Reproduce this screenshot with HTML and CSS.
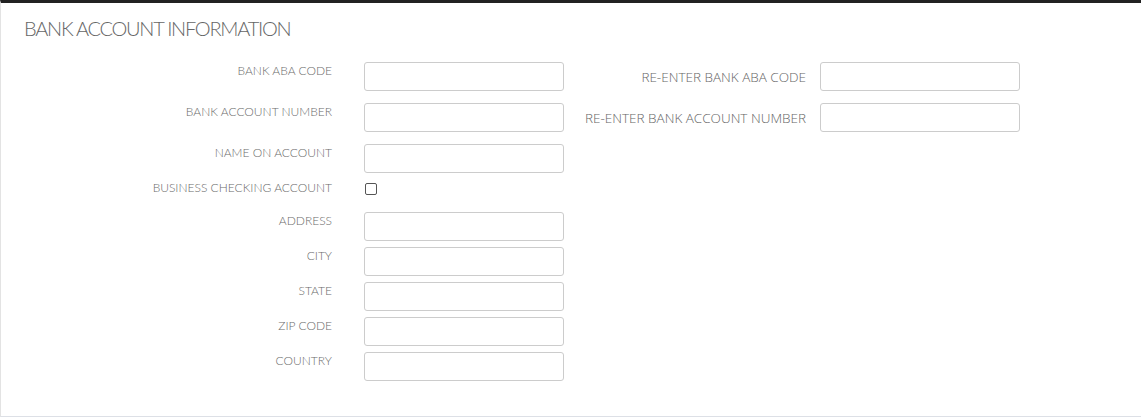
FILE: index.html
```html
<!DOCTYPE html>
<html>
<head>
<meta charset="utf-8">
<link rel="stylesheet" href="styles.css">
</head>
<body>
<section class="panel">
  <h2 class="title">BANK ACCOUNT INFORMATION</h2>
  <div class="form">
    <div class="col-left">
      <div class="row"><label class="lbl">BANK ABA CODE</label><input class="inp" type="text"></div>
      <div class="row"><label class="lbl">BANK ACCOUNT NUMBER</label><input class="inp" type="text"></div>
      <div class="row"><label class="lbl">NAME ON ACCOUNT</label><input class="inp" type="text"></div>
      <div class="row row-check"><label class="lbl">BUSINESS CHECKING ACCOUNT</label><span class="chk"></span></div>
      <div class="row tight"><label class="lbl">ADDRESS</label><input class="inp" type="text"></div>
      <div class="row tight"><label class="lbl">CITY</label><input class="inp" type="text"></div>
      <div class="row tight"><label class="lbl">STATE</label><input class="inp" type="text"></div>
      <div class="row tight"><label class="lbl">ZIP CODE</label><input class="inp" type="text"></div>
      <div class="row tight"><label class="lbl">COUNTRY</label><input class="inp" type="text"></div>
    </div>
    <div class="col-right">
      <div class="rrow"><label class="rlbl">RE-ENTER BANK ABA CODE</label><input class="inp" type="text"></div>
      <div class="rrow"><label class="rlbl">RE-ENTER BANK ACCOUNT NUMBER</label><input class="inp" type="text"></div>
    </div>
  </div>
</section>
</body>
</html>
```

FILE: styles.css
```css
html, body {
  margin: 0;
  padding: 0;
  background: #fff;
}
body {
  font-family: Lato, "Liberation Sans", sans-serif;
  color: #666;
}
.panel {
  box-sizing: border-box;
  width: 1141px;
  height: 417px;
  border-top: 3px solid #222;
  border-left: 1px solid #e3e3e3;
  border-bottom: 1px solid #dde0e6;
}
.title {
  margin: 0;
  padding: 13px 0 0 23px;
  font-size: 20px;
  font-weight: 300;
  letter-spacing: -1.25px;
  color: #666;
  line-height: 24px;
}
.form {
  display: flex;
  padding-top: 22px;
}
.col-left {
  display: flex;
  flex-direction: column;
  gap: 12px;
}
.row {
  display: flex;
  align-items: flex-start;
  gap: 32px;
}
.row.tight {
  margin-top: -6px;
}
.lbl {
  width: 331px;
  text-align: right;
  font-size: 12px;
  font-weight: 300;
  color: #6b6b6b;
  line-height: 14px;
  padding-top: 2px;
}
.row-check {
  margin-top: -6px;
  height: 27px;
}
.chk {
  box-sizing: border-box;
  width: 12px;
  height: 12px;
  margin-top: 4px;
  margin-left: 1px;
  border: 1px solid #555;
  border-radius: 2px;
}
.inp {
  box-sizing: border-box;
  width: 200px;
  height: 29px;
  margin: 0;
  border: 1px solid #ccc;
  border-radius: 3px;
  background: #fff;
  padding: 0 6px;
  font: inherit;
}
.col-right {
  display: flex;
  flex-direction: column;
  gap: 12px;
  margin-left: 20px;
}
.rrow {
  display: flex;
  align-items: center;
  gap: 14px;
}
.rlbl {
  width: 222px;
  text-align: right;
  font-family: "Open Sans", sans-serif;
  font-size: 13.5px;
  font-weight: 300;
  color: #666;
}
```
